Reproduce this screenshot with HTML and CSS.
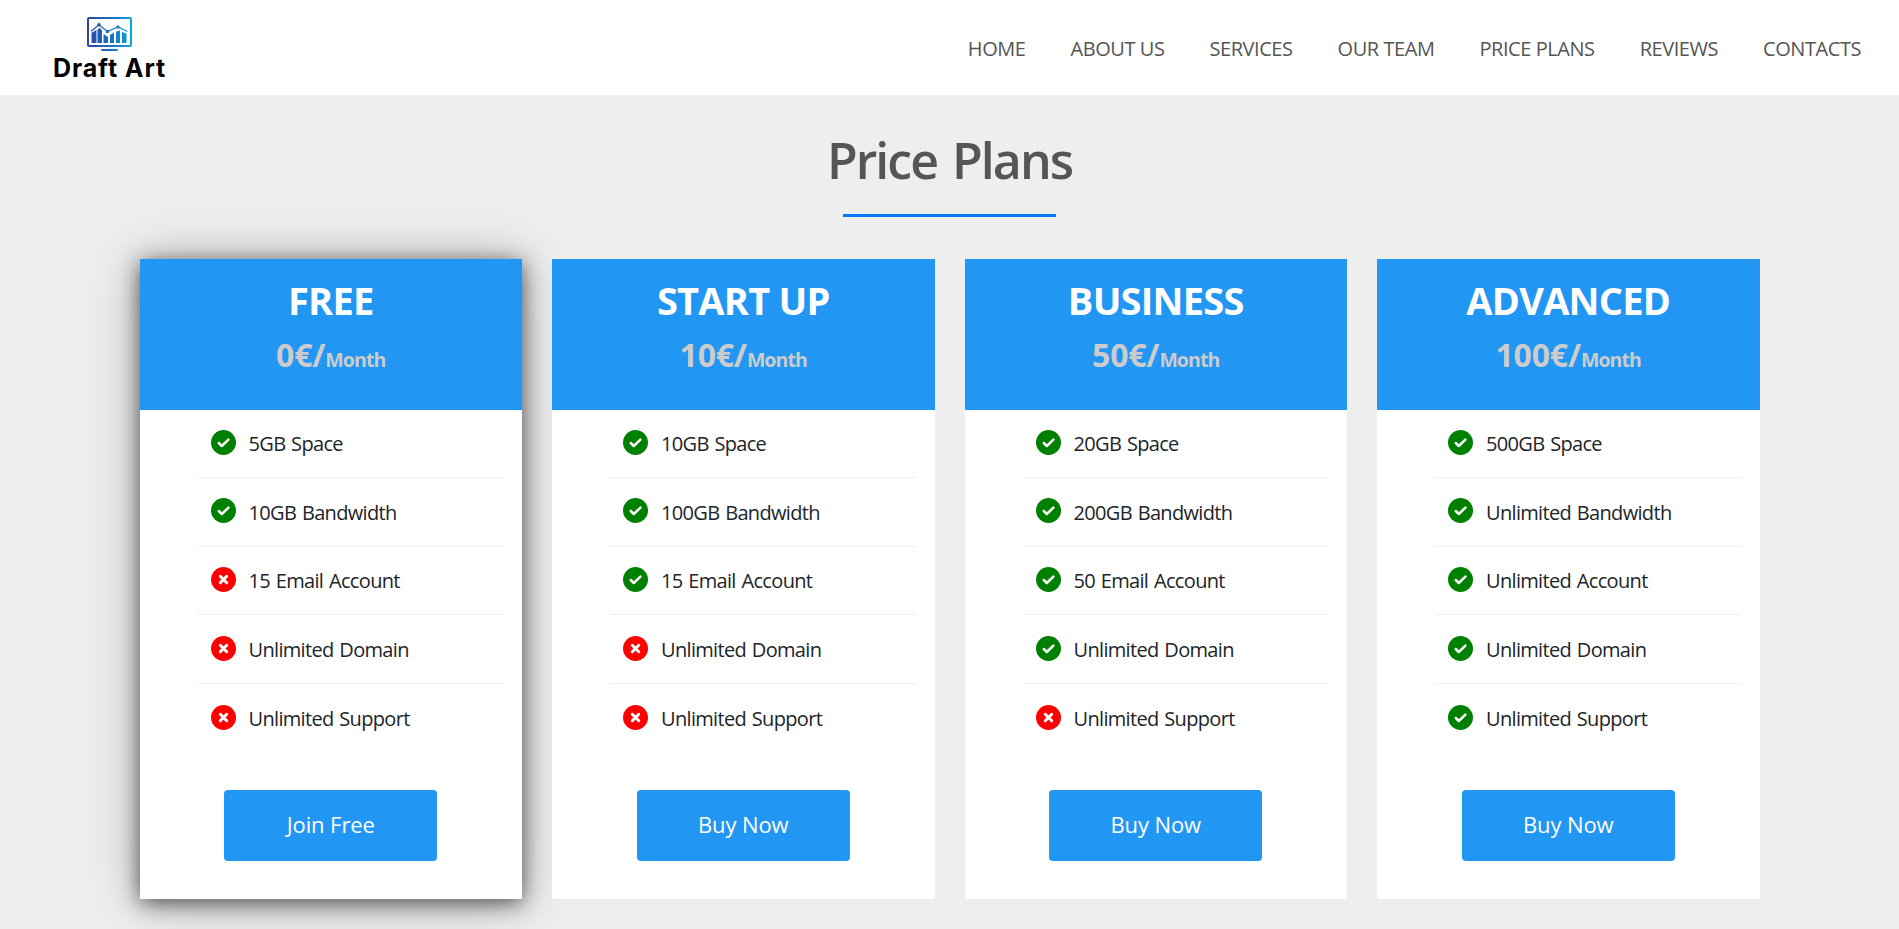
FILE: index.html
```html
<!DOCTYPE html>
<html lang="en">
<head>
  <meta charset="UTF-8">
  <meta name="viewport" content="width=device-width, initial-scale=1.0">
  <title>Draft Art</title>
  <link rel="stylesheet" href="styles.css">
</head>
<body>
  <!-- Icon sprites -->
  <svg class="sprites" aria-hidden="true">
    <symbol id="check" viewBox="0 0 25 25">
      <circle cx="12.5" cy="12.5" r="12.5" fill="green"/>
      <path d="M7.8 13l3 3 6.600-6.300" fill="none" stroke="#fff" stroke-width="2.5" stroke-linecap="round" stroke-linejoin="round"/>
    </symbol>
    <symbol id="cross" viewBox="0 0 25 25">
      <circle cx="12.5" cy="12.5" r="12.5" fill="red"/>
      <path d="M9.300 9.300l6.400 6.400M15.700 9.300l-6.400 6.400" fill="none" stroke="#fff" stroke-width="3" stroke-linecap="round"/>
    </symbol>
  </svg>

  <!-- Header -->
  <header class="header">
    <a class="logo" href="#">
      <svg class="logo-icon" viewBox="0 0 45 35">
        <defs>
          <linearGradient id="logoFill" gradientUnits="userSpaceOnUse" x1="0" y1="0" x2="45" y2="0">
            <stop offset="0" stop-color="#2f459f"/>
            <stop offset="0.5" stop-color="#1b6fc0"/>
            <stop offset="1" stop-color="#0aa5e8"/>
          </linearGradient>
        </defs>
        <rect x="1" y="1" width="43" height="28" rx="1" fill="none" stroke="url(#logoFill)" stroke-width="2"/>
        <path d="M4.500 26V15.500l5-2.500v13zM10.500 26V12.500l2-1.500 2.500 2v13zM16.500 26v-9l4.500 3v6zM23 26v-8l4-2.500v10.500zM29 26V14.500l4-1v12.500zM35 26V15l4.500 1.500v9.500z" fill="url(#logoFill)"/>
        <path d="M4 14.300l8-6.500 8.500 6.700L31 10l9.500 4.500" fill="none" stroke="#fff" stroke-width="3"/>
        <path d="M4 14.300l8-6.500 8.500 6.700L31 10l9.500 4.500" fill="none" stroke="url(#logoFill)" stroke-width="1.300"/>
        <circle cx="12" cy="7.800" r="1.700" fill="#244f9f"/>
        <circle cx="20.500" cy="14.500" r="1.700" fill="#1b6fb0"/>
        <circle cx="31" cy="10" r="1.700" fill="#1685c8"/>
        <rect x="14" y="32" width="17" height="2" rx="1" fill="url(#logoFill)"/>
      </svg>
      <span class="logo-text">Draft Art</span>
    </a>
    <nav class="nav">
      <a href="#">HOME</a>
      <a href="#">ABOUT US</a>
      <a href="#">SERVICES</a>
      <a href="#">OUR TEAM</a>
      <a href="#">PRICE PLANS</a>
      <a href="#">REVIEWS</a>
      <a href="#">CONTACTS</a>
    </nav>
  </header>

  <!-- Price plans -->
  <section class="plans">
    <h1 class="title">Price Plans</h1>
    <div class="title-line"></div>

    <div class="cards">
      <div class="card active">
        <div class="card-header">
          <h2>FREE</h2>
          <h3>0€/<small>Month</small></h3>
        </div>
        <ul>
          <li><svg class="icon"><use href="#check"/></svg>5GB Space</li>
          <li><svg class="icon"><use href="#check"/></svg>10GB Bandwidth</li>
          <li><svg class="icon"><use href="#cross"/></svg>15 Email Account</li>
          <li><svg class="icon"><use href="#cross"/></svg>Unlimited Domain</li>
          <li><svg class="icon"><use href="#cross"/></svg>Unlimited Support</li>
        </ul>
        <button class="btn">Join Free</button>
      </div>

      <div class="card">
        <div class="card-header">
          <h2>START UP</h2>
          <h3>10€/<small>Month</small></h3>
        </div>
        <ul>
          <li><svg class="icon"><use href="#check"/></svg>10GB Space</li>
          <li><svg class="icon"><use href="#check"/></svg>100GB Bandwidth</li>
          <li><svg class="icon"><use href="#check"/></svg>15 Email Account</li>
          <li><svg class="icon"><use href="#cross"/></svg>Unlimited Domain</li>
          <li><svg class="icon"><use href="#cross"/></svg>Unlimited Support</li>
        </ul>
        <button class="btn">Buy Now</button>
      </div>

      <div class="card">
        <div class="card-header">
          <h2>BUSINESS</h2>
          <h3>50€/<small>Month</small></h3>
        </div>
        <ul>
          <li><svg class="icon"><use href="#check"/></svg>20GB Space</li>
          <li><svg class="icon"><use href="#check"/></svg>200GB Bandwidth</li>
          <li><svg class="icon"><use href="#check"/></svg>50 Email Account</li>
          <li><svg class="icon"><use href="#check"/></svg>Unlimited Domain</li>
          <li><svg class="icon"><use href="#cross"/></svg>Unlimited Support</li>
        </ul>
        <button class="btn">Buy Now</button>
      </div>

      <div class="card">
        <div class="card-header">
          <h2>ADVANCED</h2>
          <h3>100€/<small>Month</small></h3>
        </div>
        <ul>
          <li><svg class="icon"><use href="#check"/></svg>500GB Space</li>
          <li><svg class="icon"><use href="#check"/></svg>Unlimited Bandwidth</li>
          <li><svg class="icon"><use href="#check"/></svg>Unlimited Account</li>
          <li><svg class="icon"><use href="#check"/></svg>Unlimited Domain</li>
          <li><svg class="icon"><use href="#check"/></svg>Unlimited Support</li>
        </ul>
        <button class="btn">Buy Now</button>
      </div>
    </div>
  </section>
</body>
</html>
```
FILE: styles.css
```css
* {
  box-sizing: border-box;
  margin: 0;
  padding: 0;
}

body {
  font-family: 'Segoe UI', 'Open Sans', sans-serif;
  font-size: 20px;
  color: #212529;
  background-color: #eee;
  height: 929px;
  overflow: hidden;
}

.sprites {
  display: none;
}

/* Header */
.header {
  display: flex;
  justify-content: space-between;
  height: 95px;
  padding: 0 38px 0 52px;
  background-color: #fff;
}

.logo {
  display: flex;
  flex-direction: column;
  align-items: center;
  width: 115px;
  padding-top: 17px;
  color: #000;
  text-decoration: none;
}

.logo-icon {
  width: 45px;
  height: 35px;
}

.logo-text {
  font-family: Inter, sans-serif;
  font-size: 25px;
  font-weight: 700;
  letter-spacing: 0.9px;
  line-height: 33px;
  white-space: nowrap;
}

.nav {
  display: flex;
  align-items: center;
  gap: 45px;
}

.nav a {
  color: #555;
  letter-spacing: -0.44px;
  line-height: 30px;
  padding-top: 3px;
  text-decoration: none;
  white-space: nowrap;
}

/* Price plans */
.plans {
  padding: 35px 139.5px 30px;
}

.title {
  color: #555;
  font-size: 50px;
  font-weight: 600;
  letter-spacing: -1.95px;
  word-spacing: 4px;
  line-height: 60px;
  text-align: center;
}

.title-line {
  width: 213px;
  height: 3px;
  margin: 24px auto 42px;
  background-color: #007bff;
}

.cards {
  display: grid;
  grid-template-columns: repeat(4, 1fr);
  gap: 30px;
}

.card {
  display: flex;
  flex-direction: column;
  height: 640px;
  background-color: #fff;
}

.card.active {
  box-shadow: 0 4px 20px rgba(0, 0, 0, 0.6), 0 2px 50px rgba(0, 0, 0, 0.25);
}

.card-header {
  height: 150.5px;
  padding-top: 18px;
  background-color: #2196f3;
  text-align: center;
}

.card-header h2 {
  color: #fff;
  font-size: 38px;
  letter-spacing: -0.75px;
  line-height: 46px;
}

.card-header h3 {
  margin-top: 12px;
  color: #ccc;
  font-size: 32px;
  letter-spacing: -0.2px;
  line-height: 40px;
}

.card-header small {
  font-size: 19.5px;
  letter-spacing: -0.9px;
}

.card ul {
  margin: 0 19px 0 58px;
  list-style: none;
}

.card li {
  display: flex;
  align-items: center;
  height: 68.6px;
  padding: 1px 0 0 13px;
  border-bottom: 1px solid #eee;
  letter-spacing: -0.67px;
  word-spacing: 1.2px;
}

.card li:last-child {
  border-bottom: none;
}

.icon {
  width: 25px;
  height: 25px;
  margin: 0 13px 3px 0;
}

.btn {
  width: 213px;
  height: 71px;
  margin: 37.500px auto 0;
  padding-bottom: 2px;
  border: none;
  border-radius: 4px;
  background-color: #2196f3;
  color: #fff;
  font-family: inherit;
  font-size: 22px;
  letter-spacing: -0.1px;
  cursor: pointer;
}
```
